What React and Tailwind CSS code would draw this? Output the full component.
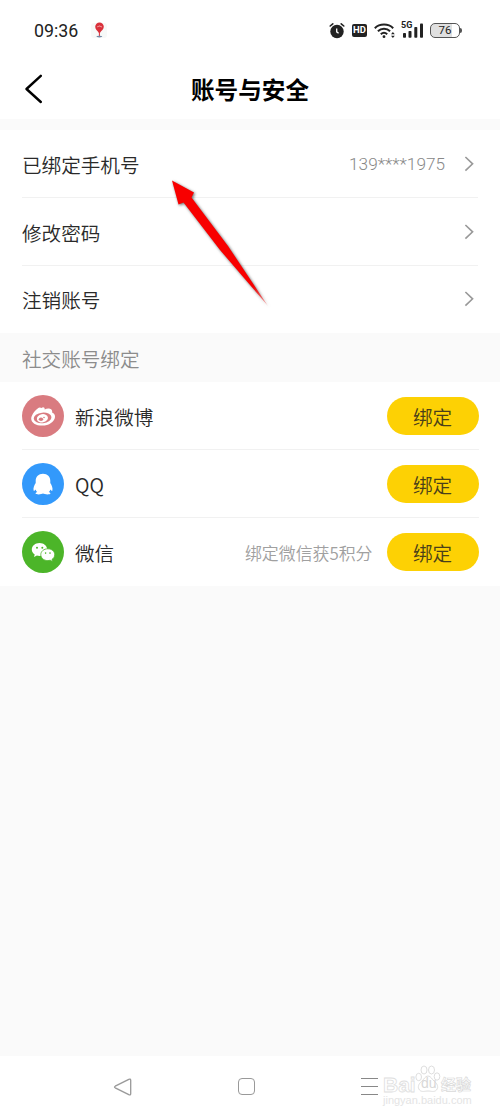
import React from 'react';

const SETTINGS = [
  { label: '已绑定手机号', value: '139****1975' },
  { label: '修改密码' },
  { label: '注销账号' },
];

const SOCIALS = [
  { name: '新浪微博', color: 'bg-[#d97b80]', Icon: WeiboIcon },
  { name: 'QQ', color: 'bg-[#3399fb]', Icon: QQIcon },
  { name: '微信', color: 'bg-[#4cb529]', Icon: WechatIcon, hint: '绑定微信获5积分' },
];

function WeiboIcon() {
  return (
    <svg viewBox="0 0 42 42" className="size-[42px]">
      <path
        d="M19.500 13c1.400-1.400 3.400-1 3.200 1.500 1.700-1 3.400-1.300 5.200-.8 2 .5 2.600 2 2.200 3.900 2 .8 3.100 2.200 2.900 4.400-.4 4.800-6 8.600-12.800 8.600-6.500 0-11-3-11-7.200 0-3.900 6-11 8.700-11 .7 0 1.200.2 1.600.6z"
        fill="#fff"
      />
      <ellipse cx="20.600" cy="22.900" rx="8.900" ry="5.300" fill="#d97b80" transform="rotate(-6 20.600 22.900)" />
      <ellipse cx="20.400" cy="23.300" rx="5.600" ry="4.100" fill="#fff" transform="rotate(-12 20.400 23.300)" />
      <ellipse cx="19" cy="24.200" rx="2.200" ry="1.800" fill="#d97b80" />
      <circle cx="22" cy="22.500" r=".8" fill="#d97b80" />
    </svg>
  );
}

function QQIcon() {
  return (
    <svg viewBox="0 0 42 42" className="size-[42px]" fill="#fff">
      <path d="M21 10.700c-4.500 0-7.300 3-7.300 7v2.300c-1.500 2.500-2.600 5-2.100 7.400.3.700 1.200 0 2-1 .3 1 .8 1.900 1.600 2.700-1 .4-1.600.9-1.600 1.400 0 1.300 6 1 7.400.1 1.400.9 7.400 1.200 7.400-.1 0-.5-.6-1-1.600-1.400.8-.8 1.300-1.700 1.600-2.700.8 1 1.700 1.700 2 1 .5-2.400-.6-4.900-2.100-7.400v-2.300c0-4-2.800-7-7.300-7z" />
    </svg>
  );
}

function WechatIcon() {
  return (
    <svg viewBox="0 0 42 42" className="size-[42px]">
      <path d="M17.500 12c-4.300 0-7.700 2.900-7.700 6.500 0 2.100 1.100 3.800 2.900 5l-.7 2.500 2.900-1.500c.8.3 1.700.4 2.600.4 4.300 0 7.700-2.800 7.700-6.400S21.800 12 17.500 12z" fill="#fff" />
      <path
        d="M25.800 17.800c-4 0-7 2.600-7 5.900s3 5.900 7 5.900c.8 0 1.600-.1 2.300-.4l2.500 1.400-.6-2.200c1.700-1.100 2.700-2.800 2.700-4.700 0-3.300-3-5.900-6.900-5.900z"
        fill="#fff"
        stroke="#4cb529"
        strokeWidth=".8"
      />
      <g fill="#4cb529">
        <circle cx="15" cy="16.700" r="1" />
        <circle cx="20.300" cy="16.700" r="1" />
        <circle cx="23.600" cy="22.100" r=".8" />
        <circle cx="28" cy="22.100" r=".8" />
      </g>
    </svg>
  );
}

function Chevron() {
  return (
    <svg viewBox="0 0 10 16" className="ml-[19px] mr-1 h-4 w-[10px]" fill="none" stroke="#999" strokeWidth="1.600">
      <path d="M1.400 1 8.600 7.800 1.400 14.600" />
    </svg>
  );
}

function StatusBar() {
  return (
    <div className="flex h-[60px] items-center pl-[34px] pr-[38px] text-[#222]">
      <span className="w-[45px] pt-px font-['Roboto',sans-serif] text-[17.800px] leading-none">09:36</span>
      <svg viewBox="0 0 16 18" className="ml-3 h-[18px] w-4">
        <rect x="0" y="2" width="16" height="15" rx="3" fill="#f7f9f8" />
        <path d="M8.500 1.500a4.300 4.300 0 0 0-4.300 4.300c0 2.500 2.200 3.800 3.700 6.200v3h1v-3c1.500-2.400 3.900-3.700 3.900-6.200a4.300 4.300 0 0 0-4.300-4.300z" fill="#d9303a" />
        <path d="M6.500 6.200c0-1 .8-1.500 1.300-.6.300-1 1.500-1 1.500 0 .6-.7 1.500-.2 1.300.7" fill="none" stroke="#f6b5b7" strokeWidth=".9" />
        <ellipse cx="8.300" cy="15.600" rx="3" ry=".8" fill="#7388a5" />
      </svg>

      <div className="ml-auto flex items-center">
        {/* budzik / alarm */}
        <svg viewBox="0 0 16 17" className="mr-px h-[17px] w-4">
          <circle cx="8" cy="9.500" r="6.700" fill="#222" />
          <path d="M1.200 4 3.800 1.800M14.800 4 12.200 1.800" stroke="#222" strokeWidth="1.600" strokeLinecap="round" />
          <path d="M7.700 6.500v3.300l1.900 1.400" fill="none" stroke="#fff" strokeWidth="1.300" />
        </svg>
        <span className="ml-[6px] mr-px flex h-[13px] w-[15px] items-center justify-center rounded-[2px] bg-[#222] font-['Roboto',sans-serif] text-[9.500px] font-bold leading-none text-white">
          HD
        </span>
        <svg viewBox="0 0 22 17" className="ml-[6px] mr-px h-[17px] w-[22px]" fill="none" stroke="#222" strokeWidth="2">
          <path d="M.8 6.200c4.800-4.800 13.600-4.800 18.400 0M3.900 9.300c3.400-3.300 8.800-3.300 12.200 0M6.800 12.200c1.900-1.800 4.500-1.800 6.400 0" />
          <circle cx="10" cy="14.700" r="1.400" fill="#222" stroke="none" />
          <path d="M17 12.300 18.900 9.900l1.900 2.400zM17 13.700l1.900 2.400 1.900-2.400z" fill="#222" stroke="none" />
        </svg>
        <div className="relative ml-[4px] h-[17px] w-[24px]">
          <span className="absolute -top-px left-0 font-['Roboto',sans-serif] text-[9px] font-bold leading-none">5G</span>
          <svg viewBox="0 0 24 17" className="h-[17px] w-[24px]" fill="#222">
            <rect x="2" y="11" width="3" height="4.800" rx=".8" />
            <rect x="7.500" y="9" width="3" height="6.800" rx=".8" />
            <rect x="13.300" y="5" width="3" height="10.800" rx=".8" />
            <rect x="19" y="1.500" width="3" height="14.300" rx=".8" />
          </svg>
        </div>
        <div className="ml-[5px] flex items-center">
          <span className="flex h-[15px] w-[30px] items-center justify-center rounded-[5px] border border-[#555] bg-[linear-gradient(90deg,#e0e0e0_76%,#fff_76%)] pt-px font-['Roboto',sans-serif] text-[11.500px] leading-none">
            76
          </span>
          <span className="h-[5px] w-[2px] rounded-r bg-[#555]" />
        </div>
      </div>
    </div>
  );
}

function Watermark() {
  return (
    <div className="absolute left-[383px] top-[6px] w-[90px] select-none font-['Liberation_Sans','Noto_Sans_CJK_SC',sans-serif] font-normal leading-none text-white">
      <div className="flex h-[36px] items-end">
        <span className="mb-[3px] w-[32px] text-[21px] font-bold [-webkit-text-stroke:0.800px_#dedede]">Bai</span>
        <span className="relative h-[36px] w-[26px]">
          <svg viewBox="0 0 26 30" className="absolute left-0 top-[2px] h-[30px] w-[26px]" fill="#fff" stroke="#dedede">
            <ellipse cx="3.700" cy="13" rx="2.800" ry="3.700" />
            <ellipse cx="9" cy="6" rx="3" ry="4" />
            <ellipse cx="16.500" cy="6" rx="3" ry="4" />
            <ellipse cx="22" cy="12.500" rx="2.800" ry="3.700" />
            <path d="M13 12c-3 0-4 3.500-6.500 5.500S2 23 4.500 26c2.300 2.500 5.500 1 8.500 1s6.200 1.500 8.500-1c2.500-3 .5-6.500-2-8.500S16 12 13 12z" />
          </svg>
          <span className="absolute left-[6px] top-[14px] text-[14px] text-[#d8d8d8]">du</span>
        </span>
        <span className="mb-[6px] text-[15px] font-bold [-webkit-text-stroke:0.700px_#dadada]">经验</span>
      </div>
      <div className="mt-[-3px] text-[11px] text-[#e4e4e4]">jingyan.baidu.com</div>
    </div>
  );
}

function NavBar() {
  return (
    <div className="relative h-[62px] bg-white">
      <div className="flex h-[61px] items-center pl-[113px]">
        <svg viewBox="0 0 20 20" className="size-5" fill="none" stroke="#999" strokeWidth="1.300" strokeLinejoin="round">
          <path d="M2.200 9.200 15.800 2.300q1.900-.7 1.900 1v13.400q0 1.700-1.900 1L2.200 10.800q-1.400-.8 0-1.600z" />
        </svg>
        <div className="ml-[105px] size-[17px] rounded-[4px] border-[1.500px] border-[#999]" />
        <div className="ml-[106px] flex w-[17px] flex-col gap-[7px]">
          <div className="h-px bg-[#888]" />
          <div className="h-px bg-[#888]" />
          <div className="h-px bg-[#888]" />
        </div>
      </div>
      <Watermark />
    </div>
  );
}

// Red pointer laid over the settings list
function PointerArrow() {
  return (
    <svg viewBox="0 0 110 140" className="pointer-events-none absolute left-[165px] top-[172px] h-[140px] w-[110px] drop-shadow-[1px_1px_1.500px_rgba(0,0,0,0.6)]">
      <defs>
        <linearGradient id="arrowFade" gradientUnits="userSpaceOnUse" x1="7" y1="8" x2="102" y2="133">
          <stop offset="0.850" stopColor="#f80000" />
          <stop offset="1" stopColor="#f80000" stopOpacity="0.300" />
        </linearGradient>
      </defs>
      <path d="M7 8.500 29 20.500 26.500 25.500 63 74 103 134 55 78 18.500 30.500 13.500 32.500z" fill="url(#arrowFade)" />
    </svg>
  );
}

export default function App() {
  return (
    <div lang="zh-CN" className="relative flex h-[1118px] w-[500px] flex-col overflow-hidden bg-[#fafafa] font-['Noto_Sans_CJK_SC',sans-serif] text-[19.600px] font-[350] text-[#2a2a2a]">
      <div className="h-[119px] bg-white font-normal">
        <StatusBar />
        <div className="grid h-[57px] grid-cols-[60px_1fr_60px] items-center">
          <svg viewBox="0 0 18 30" className="ml-6 h-[30px] w-[18px]" fill="none" stroke="#000" strokeWidth="2.400" strokeLinecap="round" strokeLinejoin="round">
            <path d="M16.800 1.800 2.500 15 16.800 28" />
          </svg>
          <h1 className="pt-0.5 text-center text-[23.600px] font-bold leading-none text-black">账号与安全</h1>
        </div>
      </div>

      <div className="mt-[11px] h-[203px] bg-white px-[22px]">
        {SETTINGS.map(({ label, value }) => (
          <div key={label} className="flex h-[68px] items-center border-b border-[#f1f1f1] last:h-[66px] last:border-b-0">
            <span className="pt-0.5">{label}</span>
            <span className="ml-auto pt-0.5 font-['Roboto',sans-serif] text-[17.200px] text-[#888]">{value}</span>
            <Chevron />
          </div>
        ))}
      </div>

      <div className="flex h-[49px] items-center px-[22px] pt-[3px] text-[#8c8c8c]">社交账号绑定</div>

      <div className="h-[204px] bg-white pl-[22px] pr-[21.500px]">
        {SOCIALS.map(({ name, color, Icon, hint }) => (
          <div key={name} className="flex h-[68px] items-center border-b border-[#f1f1f1] last:h-[67px] last:border-b-0">
            <span className={`size-[42px] rounded-full ${color}`}>
              <Icon />
            </span>
            <span className="ml-[11px] pt-0.5">{name}</span>
            <span className="ml-auto mr-[14px] pt-0.5 text-[16.900px] text-[#a0a0a0]">{hint}</span>
            <button className="flex h-[38px] w-[92px] items-center justify-center rounded-full bg-[#fdd104] pt-0.5 text-[#4a3f1a]">绑定</button>
          </div>
        ))}
      </div>

      <div className="mt-auto">
        <NavBar />
      </div>

      <PointerArrow />
    </div>
  );
}
